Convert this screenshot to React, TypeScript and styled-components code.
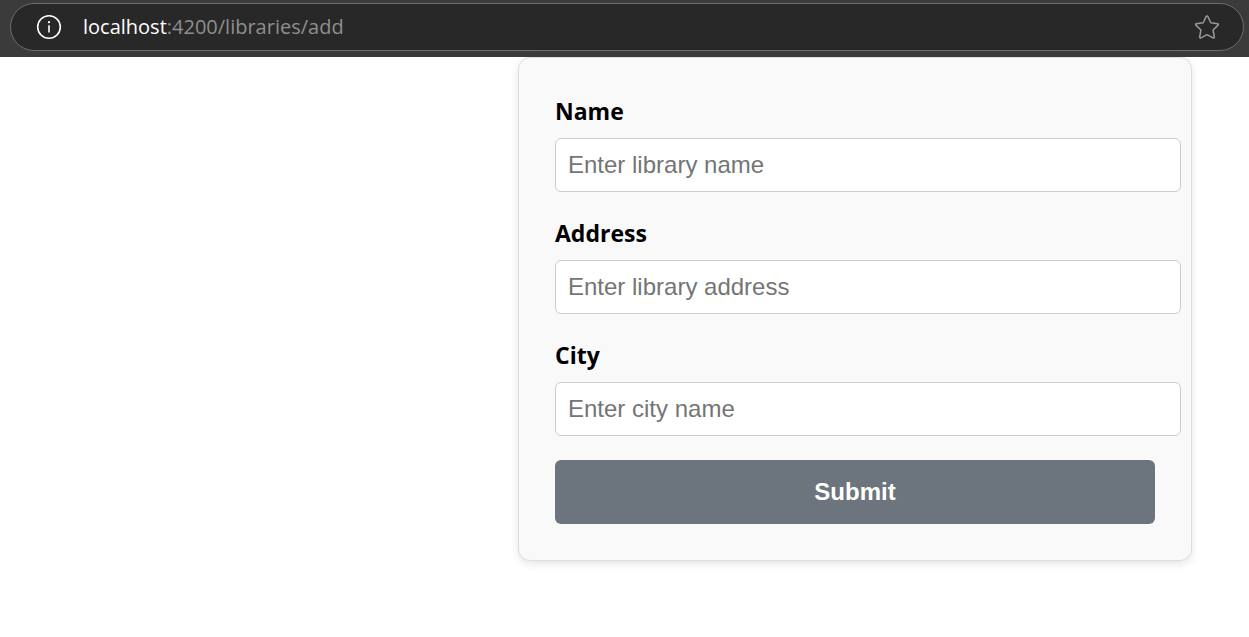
import React from "react";
import styled, { createGlobalStyle } from "styled-components";

const GlobalStyle = createGlobalStyle`
  body {
    margin: 0;
    background: #ffffff;
    color: #000000;
    font-family: "Segoe UI", "Open Sans", sans-serif;
  }
`;

const BrowserBar = styled.header`
  box-sizing: border-box;
  height: 57px;
  padding: 3px 5px 6px 10px;
  background: #3b3b3b;
`;

const AddressBar = styled.div`
  box-sizing: border-box;
  display: flex;
  align-items: center;
  height: 48px;
  padding: 0 22px 0 24px;
  border: 1px solid #6c6c6c;
  border-radius: 24px;
  background: #282828;
`;

const IconButton = styled.button<{ $color: string }>`
  display: flex;
  flex: none;
  padding: 0;
  border: 0;
  background: none;
  color: ${(p) => p.$color};
  cursor: pointer;
`;

const Url = styled.div`
  flex: 1;
  padding-left: 20px;
  color: #8f8f8f;
  font-size: 20px;
  line-height: 28px;
  white-space: nowrap;
`;

const Host = styled.span`
  color: #ffffff;
`;

const Page = styled.main`
  display: flex;
  justify-content: flex-end;
  padding: 0 57px 48px 0;
`;

const FormCard = styled.form`
  flex: 0 1 600px;
  padding: 36px;
  border: 1px solid #dddddd;
  border-radius: 12px;
  background: #f9f9f9;
  box-shadow: 0 3px 8px rgba(0, 0, 0, 0.1);
`;

const Field = styled.div`
  margin-bottom: 24px;
`;

const Label = styled.label`
  display: block;
  margin-bottom: 10px;
  font-size: 23px;
  font-weight: 700;
  line-height: 34px;
`;

const TextInput = styled.input`
  box-sizing: content-box;
  display: block;
  width: 100%;
  height: 28px;
  padding: 12px;
  border: 1px solid #cccccc;
  border-radius: 6px;
  background: #ffffff;
  font-family: Arial, "Liberation Sans", sans-serif;
  font-size: 24px;

  &::placeholder {
    color: #757575;
  }
`;

const SubmitButton = styled.button`
  display: block;
  width: 100%;
  height: 64px;
  border: 0;
  border-radius: 6px;
  background: #6c757d;
  color: #ffffff;
  font-family: Arial, "Liberation Sans", sans-serif;
  font-size: 24px;
  font-weight: 700;
  cursor: pointer;
`;

const fields = [
  { id: "name", label: "Name", placeholder: "Enter library name" },
  { id: "address", label: "Address", placeholder: "Enter library address" },
  { id: "city", label: "City", placeholder: "Enter city name" },
];

const InfoIcon = () => (
  <svg width="28" height="28" viewBox="0 0 28 28" fill="none" aria-hidden="true">
    <circle cx="14" cy="14" r="11.3" stroke="currentColor" strokeWidth="1.6" />
    <path d="M14 12.2V19.6" stroke="currentColor" strokeWidth="1.6" />
    <circle cx="14" cy="9.2" r="1.1" fill="currentColor" />
  </svg>
);

const StarIcon = () => (
  <svg width="28" height="28" viewBox="0 0 28 28" fill="none" aria-hidden="true">
    <path
      d="M13.2 3.4a.9.9 0 0 1 1.6 0l3 6.4 6.9.9a.8.8 0 0 1 .4 1.4l-5 4.9 1.2 7a.9.9 0 0 1-1.3.9L14 21.7l-6 3.2a.9.9 0 0 1-1.3-.9l1.2-7-5-4.9a.8.8 0 0 1 .4-1.4l6.9-.9z"
      stroke="currentColor"
      strokeWidth="1.5"
      strokeLinejoin="round"
    />
  </svg>
);

export default function App() {
  return (
    <>
      <GlobalStyle />
      <BrowserBar>
        <AddressBar>
          <IconButton type="button" $color="#ffffff" aria-label="View site information">
            <InfoIcon />
          </IconButton>
          <Url>
            <Host>localhost</Host>:4200/libraries/add
          </Url>
          <IconButton type="button" $color="#999999" aria-label="Add to favorites">
            <StarIcon />
          </IconButton>
        </AddressBar>
      </BrowserBar>
      <Page>
        <FormCard onSubmit={(e: React.FormEvent) => e.preventDefault()}>
          {fields.map((f) => (
            <Field key={f.id}>
              <Label htmlFor={f.id}>{f.label}</Label>
              <TextInput id={f.id} name={f.id} type="text" placeholder={f.placeholder} />
            </Field>
          ))}
          <SubmitButton type="submit">Submit</SubmitButton>
        </FormCard>
      </Page>
    </>
  );
}
